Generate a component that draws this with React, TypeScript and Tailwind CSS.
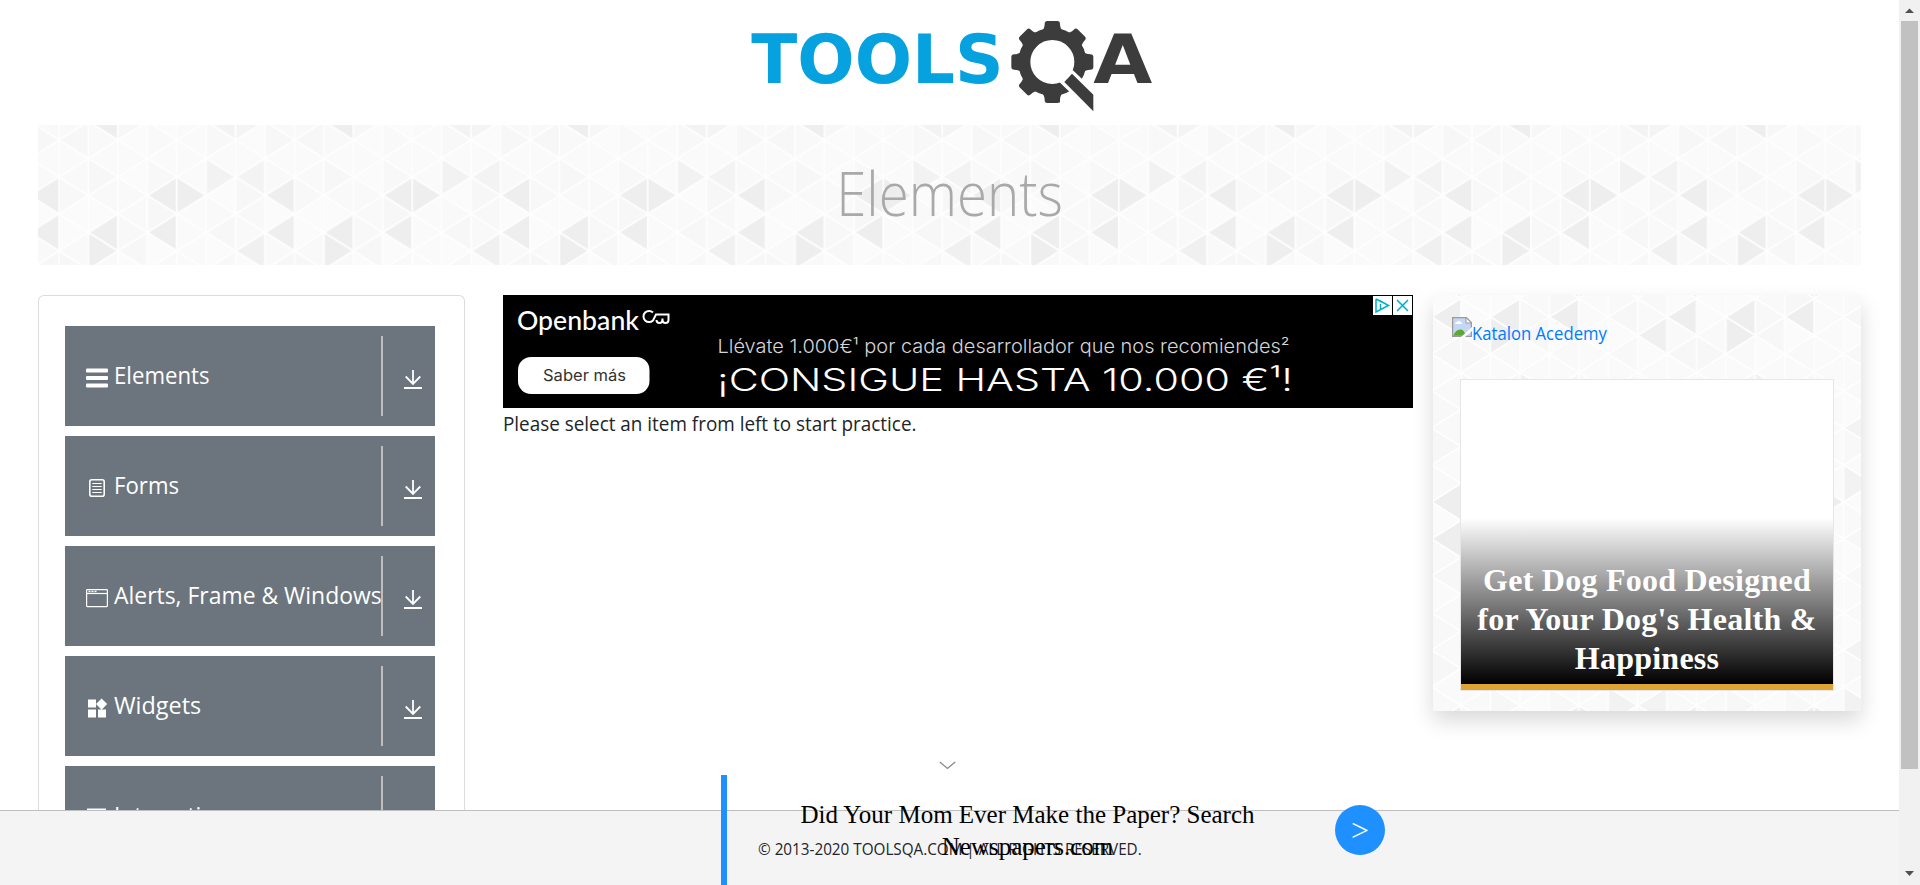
import React from 'react';

const COL = 29.44;
const ROW = 18.5;

const accents: Record<string, string> = {
  '1,-1': '#eeeeee', '5,-1': '#f3f3f3', '6,-1': '#f4f4f4',
  '1,5': '#eeeeee', '1,6': '#eeeeee', '3,3': '#eeeeee', '3,5': '#eeeeee',
  '4,3': '#eeeeee', '5,2': '#f2f2f2', '6,2': '#f3f3f3', '6,6': '#f0f0f0',
  '7,3': '#eeeeee', '7,5': '#eeeeee', '2,9': '#f1f1f1',
};
const soft = ['#fbfbfb', '#f8f8f8', '#fafafa', '#f9f9f9', '#fbfbfb', '#f9f9f9', '#f7f7f7'];

function Triangles({ id, x, y }: { id: string; x: number; y: number }) {
  const shapes: React.ReactNode[] = [];
  for (let c = 0; c < 8; c++) {
    for (let m = -2; m <= 12; m++) {
      const key = m > 10 ? m - 12 : m < -1 ? m + 12 : m;
      const fill = accents[`${c},${key}`] ?? soft[(c * 5 + (key + 2) * 3 + c * (key + 1)) % 7];
      const left = c * COL;
      const right = left + COL;
      const cy = (m + 1) * ROW;
      const pointsLeft = Math.abs(m % 2) === c % 2;
      const pts = pointsLeft
        ? `${left},${cy} ${right},${cy - ROW} ${right},${cy + ROW}`
        : `${right},${cy} ${left},${cy - ROW} ${left},${cy + ROW}`;
      shapes.push(<polygon key={`${c}_${m}`} points={pts} fill={fill} stroke="#fefefe" strokeWidth="1.6" strokeLinejoin="round" />);
    }
  }
  return (
    <svg className="absolute inset-0 h-full w-full" aria-hidden="true">
      <defs>
        <pattern id={id} width={COL * 8} height={ROW * 12} patternUnits="userSpaceOnUse" patternTransform={`translate(${x} ${y})`}>
          {shapes}
        </pattern>
      </defs>
      <rect width="100%" height="100%" fill={`url(#${id})`} />
    </svg>
  );
}

function Logo() {
  return (
    <svg className="h-[125px] w-[440px]" viewBox="0 0 1320 375" role="img" aria-label="ToolsQA">
      <g fontFamily='"DejaVu Sans", sans-serif' fontWeight="700" fontSize="205">
        <text x="64" y="250" fill="#06a2e0" textLength="757" lengthAdjust="spacingAndGlyphs">TOOLS</text>
        <text x="1090" y="250" fill="#3c3c3c" textLength="177" lengthAdjust="spacingAndGlyphs">A</text>
      </g>
      <g fill="#3c3c3c">
        <circle cx="967" cy="186" r="84" fill="none" stroke="#3c3c3c" strokeWidth="36" />
        {[0, 90, 135, 180, 225, 270, 315].map((a) => (
          <path key={a} transform={`rotate(${a + 90} 967 186)`} d="M934 96Q944 86 944 72Q944 63 952 63H982Q990 63 990 72Q990 86 1000 96Z" />
        ))}
        <path d="M967 290L990 308V282Z" />
        <path d="M1028 210L1110 288V350L1016 273L988 246Z" fill="#fff" />
        <path d="M1026 221L1090 284V334L1003 246Z" />
      </g>
    </svg>
  );
}

const icons = {
  elements: (
    <g fill="#fff">
      <rect x="0" y="2.5" width="22" height="4" rx="1" /><rect x="0" y="10" width="22" height="4" rx="1" /><rect x="0" y="17.5" width="22" height="4" rx="1" />
    </g>
  ),
  forms: (
    <g fill="none" stroke="#fff">
      <rect x="3.8" y="3.8" width="14.4" height="16.4" rx="2" strokeWidth="1.6" />
      <path d="M6.3 7.5h9.4M6.3 10.5h9.4M6.3 13.5h9.4M6.3 16.5h9.4" strokeWidth="1" />
    </g>
  ),
  windows: (
    <g fill="none" stroke="#fff" strokeWidth="1.2">
      <rect x=".6" y="3.6" width="20.8" height="17" rx=".8" />
      <path d="M1 7.5h20" />
      <path d="M2.5 5.5h2M5.5 5.5h2M8.5 5.5h2" strokeWidth="1.4" />
    </g>
  ),
  widgets: (
    <path fill="#fff" d="M2 3.500h8v8H2zM2 13.500h8v8H2zM12 13.500h8v8h-8zM15.600 2.500L21.200 8.100L15.600 13.700L10 8.100Z" />
  ),
  interactions: <path fill="#fff" d="M1 2.500h19v3H1zM1 8h19v3H1zM1 13.500h19v3H1z" />,
};

const items: { label: string; icon: keyof typeof icons; fit: string }[] = [
  { label: 'Elements', icon: 'elements', fit: 'scale-x-[0.925]' },
  { label: 'Forms', icon: 'forms', fit: 'scale-x-[0.925]' },
  { label: 'Alerts, Frame & Windows', icon: 'windows', fit: 'scale-x-[0.955]' },
  { label: 'Widgets', icon: 'widgets', fit: 'scale-x-[0.975]' },
  { label: 'Interactions', icon: 'interactions', fit: 'scale-x-[0.940]' },
];

function MenuItem({ label, icon, fit }: (typeof items)[number]) {
  return (
    <div className="flex h-[100px] shrink-0 items-center bg-[#6c757d] pl-[21px] text-white">
      <svg className="mt-[3px] h-6 w-[22px] shrink-0" viewBox="0 0 22 24">{icons[icon]}</svg>
      <span className={`ml-[6px] w-[267px] origin-left pb-[3px] text-2xl whitespace-nowrap ${fit}`}>{label}</span>
      <span className="h-20 w-[2px] shrink-0 bg-[#bfbdbd]" />
      <svg className="mt-[7px] ml-[21px] h-5 w-[18px]" viewBox="0 0 18 20" fill="none" stroke="#fff" strokeWidth="2">
        <path d="M9 0v14M1.700 6.500L9 14l7.300-7.500" strokeWidth="1.800" />
        <path d="M0 18h18" />
      </svg>
    </div>
  );
}

function Banner() {
  return (
    <div className="relative h-[113px] w-[910px] bg-black">
      <svg className="block h-[113px] w-[910px]" viewBox="503 295 910 113">
        <text x="517" y="330" fill="#fff" fontFamily="Lato, sans-serif" fontWeight="500" fontSize="27" textLength="122" lengthAdjust="spacingAndGlyphs">Openbank</text>
        <g fill="none" stroke="#fff" strokeWidth="2">
          <path d="M653 312.500a5.600 5.600 0 1 0 0 8l3-6h12.500v5.500q0 3-3 3t-3-3v-1.500q0 4.500-3 4.500t-3-3" />
        </g>
        <rect x="518" y="357" width="131.500" height="37" rx="13" fill="#fff" />
        <g fontFamily="Inter, sans-serif">
          <text x="543" y="380.500" fill="#333" fontSize="15.500" textLength="83" lengthAdjust="spacingAndGlyphs">Saber más</text>
          <text x="717.500" y="353" fill="#d5d5d5" fontWeight="300" fontSize="19" textLength="572" lengthAdjust="spacingAndGlyphs">Llévate 1.000€¹ por cada desarrollador que nos recomiendes²</text>
          <text x="717" y="390.500" fill="#fff" fontWeight="300" fontSize="31" textLength="576" lengthAdjust="spacingAndGlyphs">¡CONSIGUE HASTA 10.000 €¹!</text>
        </g>
        <path d="M1373 296h19v19h-19zM1393 296h19v19h-19z" fill="#fff" />
        <g fill="none" stroke="#00aecd" strokeWidth="1.500">
          <path d="M1376 299v13l12.500-6.500-9-5M1376 299l4 2M1380.500 304v5M1380.500 301.500v1" />
          <path d="M1397 300l11 11M1408 300l-11 11" />
        </g>
      </svg>
    </div>
  );
}

function BrokenImage() {
  return (
    <svg className="h-5 w-5 shrink-0" viewBox="0 0 20 20">
      <path d="M.6 .6H14.500L19.400 5.500V19.400H.6Z" fill="#c6d6f5" stroke="#9a9a9a" strokeWidth="1.200" />
      <path d="M14 .6V6H19.400Z" fill="#fff" stroke="#9a9a9a" />
      <path d="M3 7q0-2 2-2 1-2 3-.5 2 .5 2 2.500z" fill="#fff" />
      <path d="M1.200 18.800Q4 12 9 12.500Q12 13 14 18.800Z" fill="#5aab2d" />
      <path d="M9 20L20 10V14L13 20Z" fill="#fff" />
    </svg>
  );
}

function SideCard() {
  return (
    <aside className="relative h-[416px] w-[428px] shadow-[0_10px_20px_rgba(0,0,0,0.15)]">
      <Triangles id="card-tiles" x={28} y={-89} />
      <div className="relative flex h-full flex-col pt-[22px]">
        <a className="flex h-[30px] pl-[19px] text-[#007bff]">
          <BrokenImage />
          <span className="origin-left scale-x-[0.927] pt-[2px] text-[18px] leading-7 whitespace-nowrap">Katalon Acedemy</span>
        </a>
        <div className="mt-[32px] ml-[27px] flex h-[312px] w-[374px] flex-col border border-[#e6e6e6] bg-white">
          <div className="h-[138px]" />
          <div className="h-[166px] bg-linear-to-b/srgb from-white to-black pt-[43px] text-center font-['Liberation_Serif',serif] text-[32px] leading-[39px] font-bold tracking-[0.25px] text-white">
            Get Dog Food Designed<br />for Your Dog's Health &amp;<br />Happiness
          </div>
          <div className="h-[6px] bg-[#dda333]" />
        </div>
      </div>
    </aside>
  );
}

export default function App() {
  return (
    <div className="relative flex h-[885px] w-[1920px] overflow-hidden bg-white font-['Open_Sans','Noto_Sans',sans-serif] text-[#212529]">
      <div className="flex w-[1899px] flex-col">
        <header className="flex h-[125px] pl-[730px]"><Logo /></header>
        <div className="relative ml-[38px] flex h-[140px] w-[1823px] shrink-0 justify-center overflow-hidden">
          <Triangles id="banner-tiles" x={21} y={-3.5} />
          <h1 className="relative scale-x-[0.91] pt-[23px] text-[60px] leading-[90px] font-light text-[#a9a9a9]">Elements</h1>
        </div>
        <main className="mt-[30px] ml-[38px] flex h-[515px] shrink-0">
          <nav className="flex h-[515px] w-[427px] flex-col gap-[10px] overflow-hidden rounded-t-md border border-b-0 border-[#dcdcdc] pt-[30px] pr-[29px] pl-[26px]">
            {items.map((item) => <MenuItem key={item.label} {...item} />)}
          </nav>
          <section className="ml-[38px] w-[910px]">
            <Banner />
            <p className="origin-left scale-x-[0.944] text-[20px] leading-[32px]">Please select an item from left to start practice.</p>
          </section>
          <div className="ml-[20px]"><SideCard /></div>
        </main>
        <footer className="h-[75px] shrink-0 border-t border-[#bfbfbf] bg-[#f4f4f4] pt-[26px] pl-[758px]">
          <span className="inline-block origin-left scale-x-[0.953] text-[16px] whitespace-nowrap">© 2013-2020 TOOLSQA.COM | ALL RIGHTS RESERVED.</span>
        </footer>
      </div>
      <div className="flex w-[21px] flex-col items-center bg-[#f1f1f1]">
        <svg className="h-[21px] w-[17px] shrink-0" viewBox="0 0 17 21"><path d="M4 13L8.500 8.500L13 13Z" fill="#505050" /></svg>
        <div className="h-[748px] w-[17px] shrink-0 bg-[#c1c1c1]" />
        <div className="flex-1" />
        <svg className="h-[21px] w-[17px] shrink-0" viewBox="0 0 17 21"><path d="M4 7L8.500 12L13 7Z" fill="#505050" /></svg>
      </div>
      <svg className="absolute top-[761px] left-[939px] h-[9px] w-[17px]" viewBox="0 0 17 9" fill="none" stroke="#888" strokeWidth="1.300"><path d="M.8 1L8.500 7.500L16.200 1" /></svg>
      <div className="absolute top-[775px] left-[721px] flex h-[110px] w-[680px] border-l-[6px] border-[#1e90ff] font-['Liberation_Serif',serif]">
        <p className="w-[601px] pt-[24px] text-center text-[25px] leading-[31.500px] text-black">Did Your Mom Ever Make the Paper? Search<br />Newspapers.com</p>
        <span className="mt-[30px] ml-[7px] flex h-[50px] w-[50px] items-center justify-center rounded-full bg-[#1e90ff] text-[32px] leading-none text-white">&gt;</span>
      </div>
    </div>
  );
}
